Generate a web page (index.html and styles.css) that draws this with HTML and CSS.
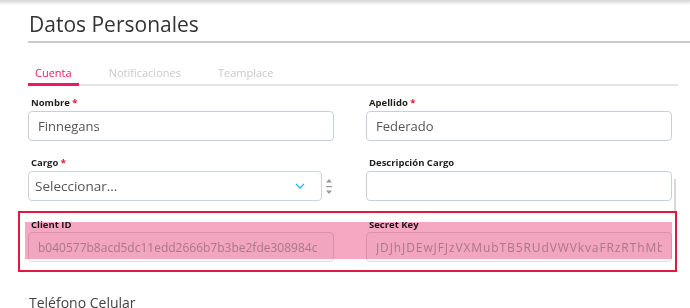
FILE: index.html
```html
<!DOCTYPE html>
<html lang="es">
<head>
    <meta charset="UTF-8">
    <meta name="viewport" content="width=device-width, initial-scale=1.0">
    <title>Datos Personales</title>
    <link rel="stylesheet" href="styles.css">
</head>
<body>
    <div class="top-shade"></div>
    <main class="page">
        <h1 class="page-title">Datos Personales</h1>

        <nav class="tabs">
            <a class="tab active" href="#">Cuenta</a>
            <a class="tab" href="#">Notificaciones</a>
            <a class="tab" href="#">Teamplace</a>
        </nav>

        <form class="form">
            <div class="row">
                <div class="field">
                    <label for="nombre">Nombre <span class="req">*</span></label>
                    <input type="text" id="nombre" value="Finnegans">
                </div>
                <div class="field">
                    <label for="apellido">Apellido <span class="req">*</span></label>
                    <input type="text" id="apellido" value="Federado">
                </div>
            </div>

            <div class="row">
                <div class="field">
                    <label>Cargo <span class="req">*</span></label>
                    <div class="select-wrap">
                        <div class="select">
                            <span>Seleccionar...</span>
                            <svg class="chevron" width="10" height="6" viewBox="0 0 10 6">
                                <path d="M1 1 L5 5 L9 1" fill="none" stroke="#29b6e8" stroke-width="1.3"/>
                            </svg>
                        </div>
                        <div class="spinner">
                            <svg width="8" height="17" viewBox="0 0 8 17">
                                <path d="M4 1 L7 4.5 L1 4.5 Z" fill="#999"/>
                                <rect x="1" y="8" width="6" height="1.2" fill="#999"/>
                                <path d="M1 12.5 L7 12.5 L4 16 Z" fill="#999"/>
                            </svg>
                        </div>
                    </div>
                </div>
                <div class="field desc">
                    <label for="descripcion">Descripción Cargo</label>
                    <input type="text" id="descripcion">
                </div>
            </div>

            <div class="row credentials">
                <div class="field">
                    <label for="clientId">Client ID</label>
                    <input type="text" id="clientId" value="b040577b8acd5dc11edd2666b7b3be2fde308984c" readonly>
                </div>
                <div class="field">
                    <label for="secretKey">Secret Key</label>
                    <input type="text" id="secretKey" class="secret" value="JDJhJDEwJFJzVXMubTB5RUdVWVkvaFRzRThMbEt" readonly>
                </div>
                <div class="highlight"></div>
                <div class="outline"></div>
            </div>

            <div class="phone">Teléfono Celular</div>
        </form>
    </main>
</body>
</html>
```

FILE: styles.css
```css
body {
    margin: 0;
    font-family: "Open Sans", Arial, sans-serif;
    background-color: #fff;
    color: #333;
    overflow: hidden;
}

.top-shade {
    height: 5px;
    background: linear-gradient(#d4d4d4, #fff);
}

.page {
    padding-left: 28px;
}

.page-title {
    margin: 7px 0 0 0;
    padding-left: 1px;
    padding-bottom: 5px;
    font-size: 21px;
    font-weight: 400;
    line-height: 24px;
    color: #333;
    border-bottom: 2px solid #cbcbcb;
}

.tabs {
    display: flex;
    gap: 23px;
    margin: 23px 12px 0 0;
    border-bottom: 2px solid #e4e4e4;
}

.tab {
    position: relative;
    padding: 0 7px 4px 7px;
    font-size: 11px;
    line-height: 14px;
    color: #c9c9c9;
    text-decoration: none;
}

.tab.active {
    color: #ec1d5e;
}

.tab.active::after {
    content: "";
    position: absolute;
    left: 0;
    right: 0;
    bottom: -2px;
    height: 3px;
    background-color: #f0195f;
}

.form {
    width: 644px;
    padding-top: 11px;
}

.row {
    display: grid;
    grid-template-columns: 306px 306px;
    gap: 32px;
    margin-bottom: 16px;
}

.field {
    position: relative;
}

label {
    display: block;
    margin: 0 0 2px 3px;
    font-size: 9.5px;
    font-weight: 700;
    line-height: 12px;
    color: #1e1e1e;
}

.req {
    color: #e8102a;
}

input {
    display: block;
    width: 100%;
    height: 30px;
    box-sizing: border-box;
    padding: 0 9px;
    border: 1px solid #c4d0dd;
    border-radius: 4px;
    font-family: "Open Sans", Arial, sans-serif;
    font-size: 13px;
    color: #555;
    background-color: #fff;
}

.select-wrap {
    display: flex;
    align-items: center;
    gap: 3px;
}

.select {
    display: flex;
    align-items: center;
    justify-content: space-between;
    width: 294px;
    height: 30px;
    box-sizing: border-box;
    padding: 0 16px 0 6px;
    border: 1px solid #ccd3dc;
    border-radius: 4px;
    font-size: 13.5px;
    color: #555;
}

.spinner {
    display: flex;
}

.desc::after {
    content: "";
    position: absolute;
    right: -4px;
    top: 22px;
    width: 2px;
    height: 34px;
    background-color: #d8d8d8;
}

.credentials {
    position: relative;
    margin-top: 18px;
}

.credentials label {
    margin-bottom: 1px;
}

.credentials input {
    border-color: #e0e0e0;
    background-color: #fbfbfb;
    color: #b4b4b4;
    font-size: 12px;
}

.credentials .secret {
    letter-spacing: 0.9px;
}

.highlight {
    position: absolute;
    left: -3px;
    top: 3px;
    width: 647px;
    height: 37px;
    background-color: #f6a8c2;
    mix-blend-mode: multiply;
}

.outline {
    position: absolute;
    left: -10px;
    top: -8px;
    width: 655px;
    height: 57px;
    border: 2px solid #e0173f;
}

.phone {
    margin-top: 31px;
    padding-left: 1px;
    font-size: 14px;
    line-height: 20px;
    color: #444;
}
```
